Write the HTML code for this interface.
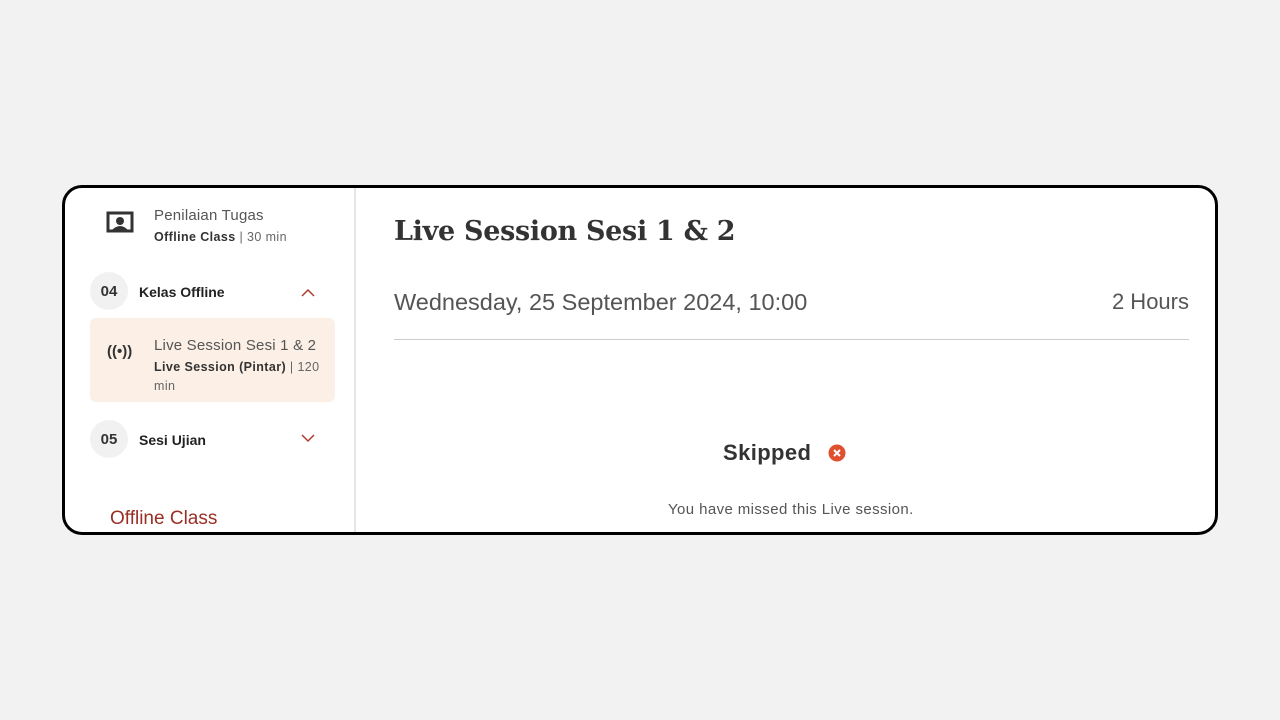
<!DOCTYPE html>
<html><head><style>
body{margin:0;width:1280px;height:720px;background:#f2f2f2;font-family:"Liberation Sans",sans-serif;position:relative;overflow:hidden}
.card{position:absolute;left:62px;top:185px;width:1150px;height:344px;border:3px solid #000;border-radius:20px;background:#fff;overflow:hidden}
.div{position:absolute;left:289px;top:0;bottom:0;width:2px;background:#e6e6e6}
.a{position:absolute;white-space:nowrap}
.num{position:absolute;width:38px;height:38px;border-radius:50%;background:#f1f1f1;font-weight:bold;font-size:15px;color:#333;text-align:center;line-height:40px}
</style></head><body>
<div class="card">
<div class="div"></div>
<svg class="a" style="left:41px;top:23px" width="28" height="24" viewBox="0 0 28 24"><rect x="2" y="2" width="24" height="18" fill="none" stroke="#333" stroke-width="3"/><circle cx="14" cy="10" r="4" fill="#333"/><path d="M5 20 Q14 10 23 20Z" fill="#333"/></svg>
<div class="a" style="left:89px;top:19px;font-size:15px;color:#555;letter-spacing:0.2px">Penilaian Tugas</div>
<div class="a" style="left:89px;top:42px;font-size:12.5px;color:#666;letter-spacing:0.4px"><b style="color:#333">Offline Class</b> | 30 min</div>
<div class="num" style="left:25px;top:84px">04</div>
<div class="a" style="left:74px;top:96px;font-size:14px;font-weight:bold;color:#222">Kelas Offline</div>
<svg class="a" style="left:236px;top:100px" width="14" height="9"><path d="M1 8 L7 2 L13 8" fill="none" stroke="#b03a2e" stroke-width="1.5"/></svg>
<div class="a" style="left:25px;top:130px;width:245px;height:84px;background:#fbefe6;border-radius:6px"></div>
<div class="a" style="left:42px;top:155px;font-size:15px;font-weight:bold;color:#333">((•))</div>
<div class="a" style="left:89px;top:149px;font-size:15px;color:#555;letter-spacing:0.2px">Live Session Sesi 1 &amp; 2</div>
<div class="a" style="left:89px;top:170px;font-size:12.5px;color:#666;line-height:19px;white-space:normal;width:175px;letter-spacing:0.4px"><b style="color:#333">Live Session (Pintar)</b> | 120 min</div>
<div class="num" style="left:25px;top:232px">05</div>
<div class="a" style="left:74px;top:244px;font-size:14px;font-weight:bold;color:#222">Sesi Ujian</div>
<svg class="a" style="left:236px;top:246px" width="14" height="9"><path d="M1 1 L7 7 L13 1" fill="none" stroke="#b03a2e" stroke-width="1.5"/></svg>
<div class="a" style="left:45px;top:320px;font-size:19px;color:#9a2f25">Offline Class</div>
<div class="a" style="left:329px;top:28px;font-family:'DejaVu Serif',serif;font-weight:bold;font-size:27px;color:#333;letter-spacing:-0.3px">Live Session Sesi 1 &amp; 2</div>
<div class="a" style="left:329px;top:101px;font-size:23.5px;color:#555">Wednesday, 25 September 2024, 10:00</div>
<div class="a" style="right:26px;top:101px;font-size:22px;color:#555">2 Hours</div>
<div class="a" style="left:329px;top:151px;width:795px;height:1px;background:#ccc"></div>
<div class="a" style="left:658px;top:252px;font-size:22px;font-weight:bold;color:#333;letter-spacing:0.4px">Skipped</div>
<svg class="a" style="left:763px;top:256px" width="18" height="18"><circle cx="9" cy="9" r="8.5" fill="#e0502f"/><path d="M6 6L12 12M12 6L6 12" stroke="#fff" stroke-width="2"/></svg>
<div class="a" style="left:603px;top:313px;font-size:15px;color:#555;letter-spacing:0.4px">You have missed this Live session.</div>
</div>
</body></html>
